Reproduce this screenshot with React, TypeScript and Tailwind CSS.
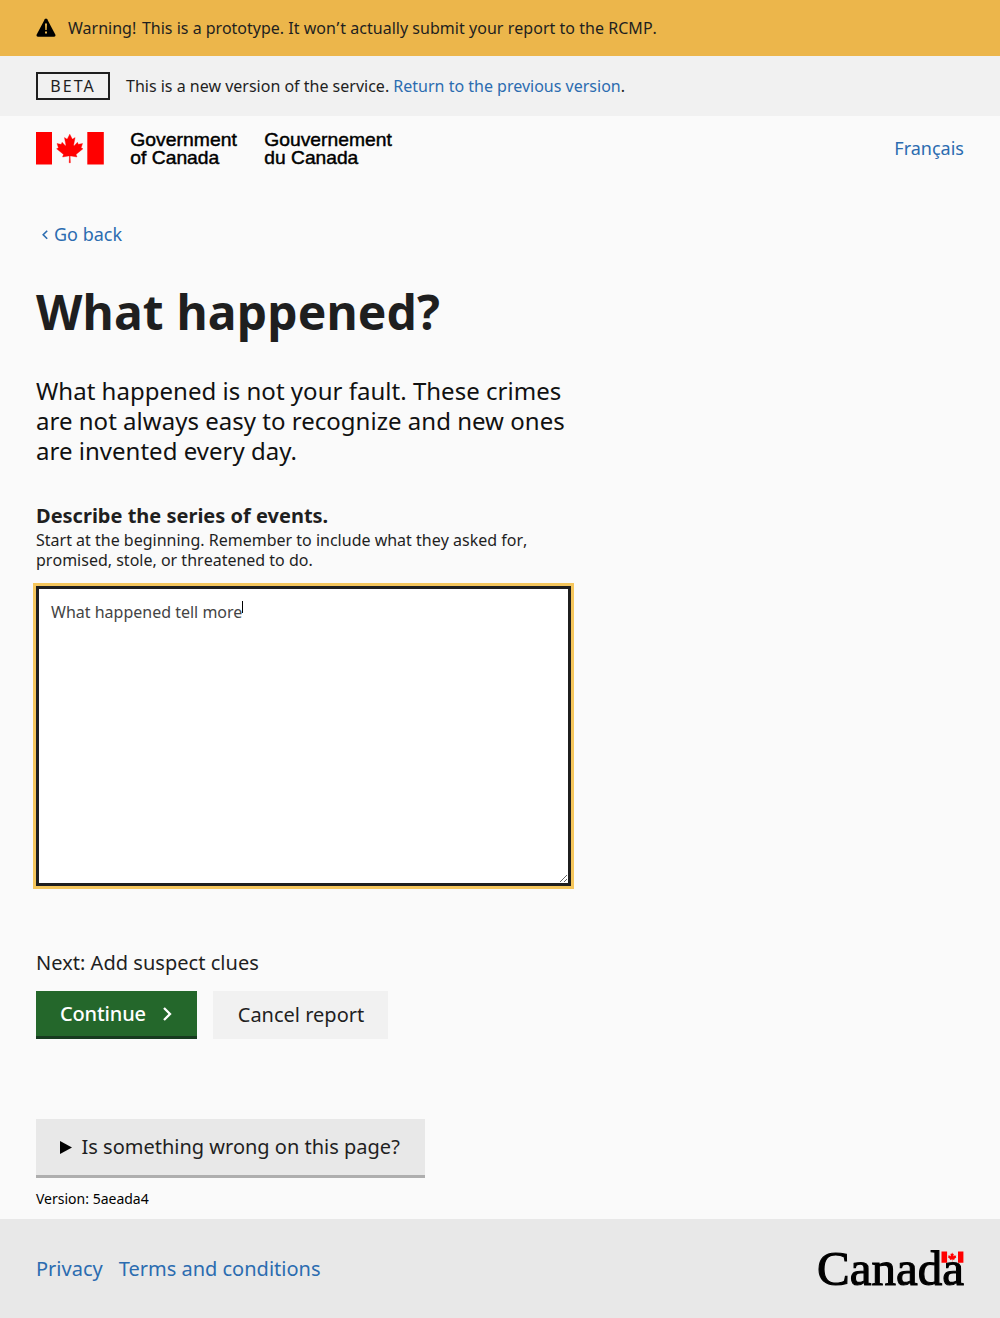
const LEAF =
  'm4890 4430-45-863a95 95 0 0 1 111-98l859 151-116-320a65 65 0 0 1 20-73l941-762-212-99a65 65 0 0 1-34-79l186-572-542 115a65 65 0 0 1-73-38l-105-247-423 454a65 65 0 0 1-111-57l204-1052-327 189a65 65 0 0 1-91-27l-332-652-332 652a65 65 0 0 1-91 27l-327-189 204 1052a65 65 0 0 1-111 57l-423-454-105 247a65 65 0 0 1-73 38l-542-115 186 572a65 65 0 0 1-34 79l-212 99 941 762a65 65 0 0 1 20 73l-116 320 859-151a95 95 0 0 1 111 98l-45 863z';

function GovernmentLogo() {
  return (
    <svg width="360" height="36" viewBox="0 0 360 36" className="block overflow-visible" fontFamily="'Liberation Sans', sans-serif" fontSize="19">
      <path d="M0 0h16v32.4H0zM51.3 0h16.5v32.4H51.3z" fill="#f00" />
      <path d={LEAF} fill="#f00" stroke="#f00" strokeWidth="50" transform="translate(-.3 -.7) scale(.0071)" />
      <g fill="#000" stroke="#000" strokeWidth=".45">
        <text x="94.3" y="14" textLength="106.5" lengthAdjust="spacingAndGlyphs">Government</text>
        <text x="94.3" y="32.4" textLength="89" lengthAdjust="spacingAndGlyphs">of Canada</text>
        <text x="228.3" y="14" textLength="127.5" lengthAdjust="spacingAndGlyphs">Gouvernement</text>
        <text x="228.3" y="32.4" textLength="94" lengthAdjust="spacingAndGlyphs">du Canada</text>
      </g>
    </svg>
  );
}

function CanadaWordmark() {
  return (
    <svg width="146" height="36" viewBox="0 0 146 36" className="block overflow-visible">
      <text
        x="-1"
        y="34.4"
        fontFamily="'Liberation Serif', serif"
        fontSize="48.5"
        textLength="147"
        lengthAdjust="spacingAndGlyphs"
        fill="#000"
        stroke="#000"
        strokeWidth="1.1"
      >
        Canada
      </text>
      <path d="M123.5 .6h5.6v11.2h-5.6zM140 .6h5.4v11.2H140z" fill="#f00" />
      <path d={LEAF} fill="#f00" transform="translate(123.1 .6) scale(.0023)" />
    </svg>
  );
}

export default function App() {
  return (
    <div className="flex h-[1318px] w-full flex-col bg-[#fafafa] font-['Noto_Sans',sans-serif] text-[#1f1f1f]">
      <div className="flex h-14 items-center bg-[#ecb64b] px-9 text-base text-[#1f1f1f]">
        <svg width="20" height="20" viewBox="0 0 20 20" className="mr-3 block">
          <path d="M8.8 1.3Q10 -.4 11.2 1.3L19.3 16.6Q20 18.6 18.2 18.8H1.8Q0 18.6.7 16.6Z" fill="#000" />
          <path d="M9 5.6h2l-.3 6.4H9.3zM9 13.6h2v2H9z" fill="#ecb64b" />
        </svg>
        <p>
          Warning<span className="tracking-[1.6px]">!</span> This is a prototype. It wo<span className="tracking-[0.9px]">n’</span>t
          <span className="tracking-[0.03px] [font-kerning:none]"> actually submit your report to the RCMP.</span>
        </p>
      </div>
      <div className="flex h-15 items-center bg-[#f1f1f1] px-9 text-base">
        <span className="mr-4 flex h-7 w-[74px] items-center justify-center border-2 border-[#1f1f1f] tracking-[2px]">BETA</span>
        <p>
          This is a new version of the service. <a className="text-[#2b6cb0]">Return to the previous version</a>.
        </p>
      </div>
      <header className="flex h-[65px] items-start justify-between px-9 pt-4">
        <GovernmentLogo />
        <a className="mt-0.5 text-lg leading-7 text-[#2b6cb0]">Français</a>
      </header>
      <main className="flex flex-1 flex-col items-start px-9">
        <a className="mt-[39px] flex h-7 items-center text-lg text-[#2b6cb0]">
          <svg width="18" height="18" viewBox="0 0 18 18" fill="none" stroke="currentColor" strokeWidth="1.6">
            <path d="M11.2 5.8 7.2 9.8l4 4" />
          </svg>
          Go back
        </a>
        <h1 className="mt-[34px] text-5xl leading-[60px] font-bold tracking-[0.15px]">What happened?</h1>
        <p className="mt-[34px] w-[540px] text-2xl leading-[30px] tracking-[0.02px] text-[#111]">
          What happened is not your fault. These crimes are not always easy to recognize and new ones are invented every day.
        </p>
        <label className="mt-[37px] text-xl leading-[25px] font-bold">Describe the series of events.</label>
        <p className="mt-0.5 w-[540px] text-base leading-5 [font-kerning:none]">
          Start at the beginning. Remember to include what they asked for, promised, stole, or threatened to do.
        </p>
        <div className="relative mt-4 h-[300px] w-[535px]">
          <textarea
            className="block h-[300px] w-[535px] resize border-3 border-[#1f1f1f] bg-white px-3 py-3 text-base leading-[22px] text-[#444] outline-3 outline-[#f5c65c]"
            defaultValue="What happened tell more"
          />
          <span className="absolute top-[15px] left-[206px] h-3 w-px bg-black" />
        </div>
        <p className="mt-16 text-xl leading-[25px] tracking-[0.03px]">Next: Add suspect clues</p>
        <div className="mt-4 flex gap-4 text-xl">
          <button className="flex h-12 w-[161px] items-center border-b-3 border-[#173a1f] bg-[#24672b] pl-6 font-medium text-white">
            <span className="tracking-[-0.15px]">Continue</span>
            <svg width="12" height="16" viewBox="0 0 12 16" fill="none" stroke="currentColor" strokeWidth="2.3" className="ml-4">
              <path d="m2 2 6 6-6 6" />
            </svg>
          </button>
          <button className="h-12 w-[175px] bg-[#f1f1f1] pl-px">Cancel report</button>
        </div>
        <div className="mt-20 flex h-[59px] w-[389px] items-center border-b-3 border-[#aeaeae] bg-[#e8e8e8] pl-6 text-xl">
          <svg width="12" height="13" viewBox="0 0 12 13" className="mr-[9.5px]">
            <path d="M0 0 12 6.5 0 13z" fill="#000" />
          </svg>
          Is something wrong on this page?
        </div>
        <p className="mt-3 text-sm leading-[18px] text-black">Version: 5aeada4</p>
      </main>
      <footer className="flex h-[99px] items-center justify-between bg-[#e8e8e8] px-9 text-xl">
        <nav className="flex gap-4 text-[#2b6cb0]">
          <a>Privacy</a>
          <a>Terms and conditions</a>
        </nav>
        <CanadaWordmark />
      </footer>
    </div>
  );
}
